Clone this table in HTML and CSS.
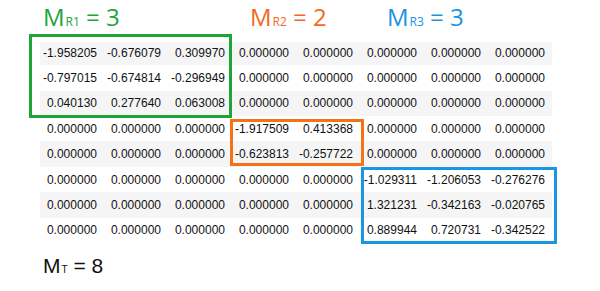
FILE: index.html
```html
<!DOCTYPE html>
<html>
<head>
<meta charset="utf-8">
<link rel="stylesheet" href="styles.css">
</head>
<body>
<div class="page">
  <div class="titles">
    <div class="title green">M<span class="sub">R1</span> = 3</div>
    <div class="title orange">M<span class="sub">R2</span> = 2</div>
    <div class="title blue">M<span class="sub">R3</span> = 3</div>
  </div>
  <div class="matrix">
    <table class="grid">
      <tr><td>-1.958205</td><td>-0.676079</td><td>0.309970</td><td>0.000000</td><td>0.000000</td><td>0.000000</td><td>0.000000</td><td>0.000000</td></tr>
      <tr><td>-0.797015</td><td>-0.674814</td><td>-0.296949</td><td>0.000000</td><td>0.000000</td><td>0.000000</td><td>0.000000</td><td>0.000000</td></tr>
      <tr><td>0.040130</td><td>0.277640</td><td>0.063008</td><td>0.000000</td><td>0.000000</td><td>0.000000</td><td>0.000000</td><td>0.000000</td></tr>
      <tr><td>0.000000</td><td>0.000000</td><td>0.000000</td><td class="left">-1.917509</td><td>0.413368</td><td>0.000000</td><td>0.000000</td><td>0.000000</td></tr>
      <tr><td>0.000000</td><td>0.000000</td><td>0.000000</td><td class="left">-0.623813</td><td>-0.257722</td><td>0.000000</td><td>0.000000</td><td>0.000000</td></tr>
      <tr><td>0.000000</td><td>0.000000</td><td>0.000000</td><td>0.000000</td><td>0.000000</td><td>-1.029311</td><td>-1.206053</td><td>-0.276276</td></tr>
      <tr><td>0.000000</td><td>0.000000</td><td>0.000000</td><td>0.000000</td><td>0.000000</td><td>1.321231</td><td>-0.342163</td><td>-0.020765</td></tr>
      <tr><td>0.000000</td><td>0.000000</td><td>0.000000</td><td>0.000000</td><td>0.000000</td><td>0.889944</td><td>0.720731</td><td>-0.342522</td></tr>
    </table>
    <div class="box box-green"></div>
    <div class="box box-orange"></div>
    <div class="box box-blue"></div>
  </div>
  <div class="total">M<span class="sub-t">T</span> = 8</div>
</div>
</body>
</html>
```

FILE: styles.css
```css
html, body {
  margin: 0;
  padding: 0;
  background: #ffffff;
}

.page {
  width: 600px;
  height: 291px;
  overflow: hidden;
}

.titles {
  display: grid;
  grid-template-columns: 207px 137px auto;
  padding-left: 43px;
  height: 33px;
  font-family: "Open Sans", "Noto Sans", sans-serif;
  font-size: 24px;
  line-height: 33px;
}

.title {
  white-space: nowrap;
}

.title .sub {
  font-size: 12px;
  margin-left: 1px;
}

.green { color: #22a43a; }
.orange { color: #f26a1e; }
.blue { color: #1b93e0; }

.matrix {
  position: relative;
  margin-top: 9px;
  margin-left: 40px;
  width: 512px;
}

.grid {
  border-collapse: collapse;
  border-spacing: 0;
  font-family: "Liberation Sans", Arial, sans-serif;
  font-size: 12px;
  color: #111111;
}

.grid td {
  width: 64px;
  box-sizing: border-box;
  padding: 0 7px 0 0;
  text-align: right;
  white-space: nowrap;
  line-height: 14px;
}

.grid td.left {
  text-align: right;
}

.grid tr { height: 25.4px; }
.grid tr:nth-child(1) { height: 22.5px; }
.grid tr:nth-child(2) { height: 26.2px; }
.grid tr:nth-child(odd) { background: #f5f5f5; }

.box {
  position: absolute;
  box-sizing: border-box;
  border: 3px solid;
}

.box-green {
  left: -11px;
  top: -8px;
  width: 203px;
  height: 84px;
  border-color: #1ea539;
}

.box-orange {
  left: 190px;
  top: 77px;
  width: 134px;
  height: 47px;
  border-color: #f57216;
}

.box-blue {
  left: 321px;
  top: 125px;
  width: 196px;
  height: 77px;
  border-color: #1a96e3;
}

.total {
  margin-top: 11px;
  padding-left: 43px;
  font-family: "Liberation Sans", Arial, sans-serif;
  font-size: 21px;
  color: #111111;
  white-space: nowrap;
}

.total .sub-t {
  font-size: 10px;
  margin-left: 1px;
}
```
